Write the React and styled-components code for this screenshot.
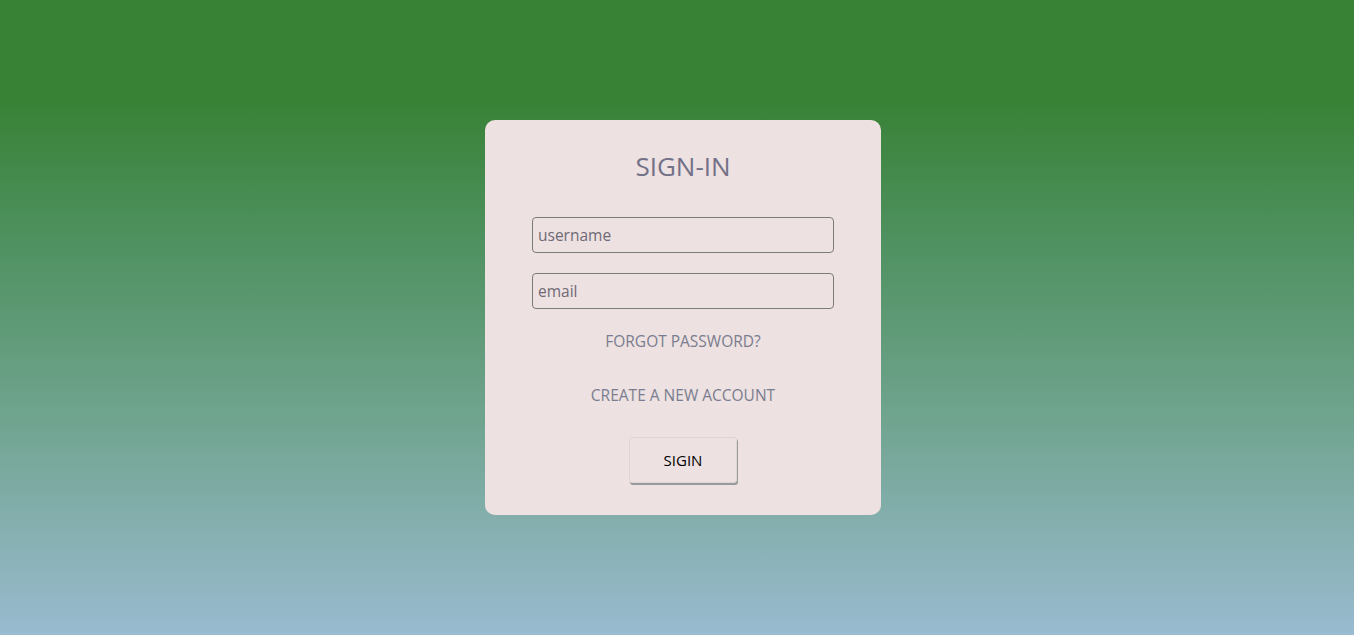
import styled, { createGlobalStyle } from 'styled-components'
import { useState } from 'react'

const Global = createGlobalStyle`
* { box-sizing: border-box; }
body {
  margin: 0;
  font-family: "Open Sans", "Noto Sans", sans-serif;
}
`

export default function App() {
  const [name, setName] = useState('')
  const [email, setEmail] = useState('')
  return (
    <>
      <Global />
      <Section>
        <Card onSubmit={(e) => e.preventDefault()}>
          <Title>SIGN-IN</Title>
          <Input type='text' placeholder='username' value={name} onChange={(e) => setName(e.target.value)} />
          <Input type='email' placeholder='email' value={email} onChange={(e) => setEmail(e.target.value)} />
          <LinkText href='#'>FORGOT PASSWORD?</LinkText>
          <LinkText href='#' $top='30px'>CREATE A NEW ACCOUNT</LinkText>
          <Button type='submit'>SIGIN</Button>
        </Card>
      </Section>
    </>
  )
}

const Section = styled.section`
display:flex;
justify-content:center;
align-items:flex-start;
height:635px;
padding:120px 0 0 12px;
background:linear-gradient(to bottom, #388236 0%, #388236 16%, #4f9160 38%, #70a48f 66%, #9abbd0 100%);
`

const Card = styled.form`
width:396px;
height:395px;
background:#ede1e1;
border-radius:10px;
display:flex;
flex-direction:column;
align-items:center;
padding-top:28px;
`

const Title = styled.h1`
margin:0 0 33px;
font-size:26px;
font-weight:400;
line-height:36px;
color:#727188;
`

const Input = styled.input`
width:302px;
height:36px;
margin-bottom:20px;
padding:0 5px;
font-family:inherit;
font-size:15.5px;
color:#555;
background:transparent;
border:1px solid #7b7b7b;
border-radius:4px;
outline:none;

&::placeholder{
  color:#6e6a76;
}
`

const LinkText = styled.a`
margin-top:${(p) => p.$top || '0'};
font-size:15.5px;
line-height:24px;
color:#7a7d8f;
text-decoration:none;
`

const Button = styled.button`
margin-top:30px;
width:108px;
height:46px;
font-family:inherit;
font-size:15px;
color:#000;
background:#ede1e1;
border:1px solid #dcd6d6;
border-radius:3px;
box-shadow:1px 2px 0 #9a9a9a;
cursor:pointer;
`
